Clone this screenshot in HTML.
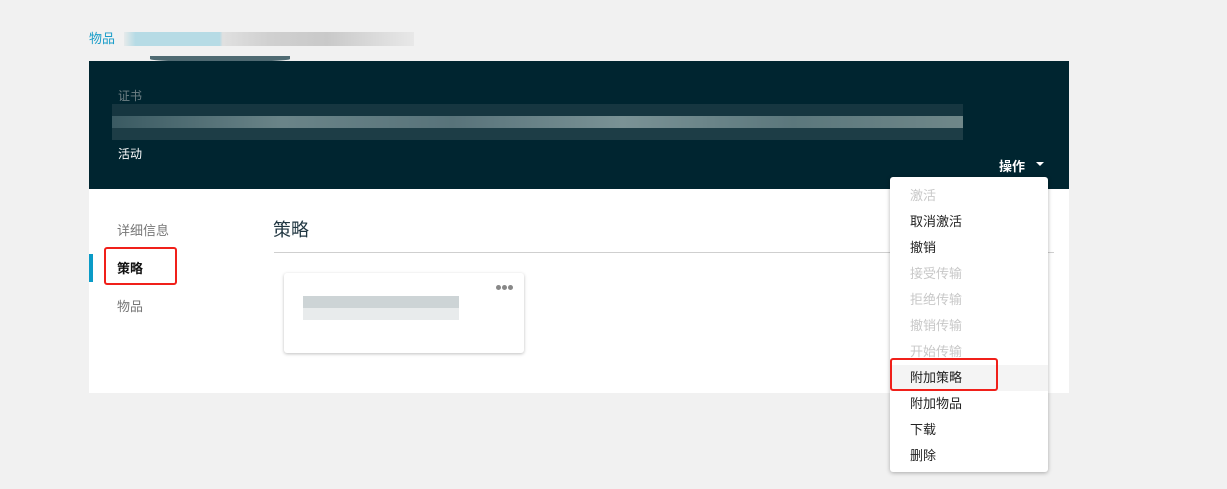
<!DOCTYPE html>
<html><head><meta charset="utf-8"><style>
*{margin:0;padding:0;box-sizing:border-box}
body{width:1227px;height:489px;background:#f1f1f1;font-family:"Liberation Sans","Noto Sans CJK SC",sans-serif;position:relative;overflow:hidden}
.abs{position:absolute}
.crumb{left:89px;top:28px;color:#1a9dc9;font-size:13px}
.hdr{left:89px;top:61px;width:980px;height:128px;background:#002530}
.panel{left:89px;top:189px;width:980px;height:204px;background:#fff}
.nav{font-size:13px;color:#777}
.menu{left:890px;top:177px;width:158px;height:295px;background:#fff;border-radius:3px;box-shadow:0 1px 4px rgba(0,0,0,.3)}
.menu div{height:26px;line-height:26px;padding-left:20px;font-size:13px;color:#222}
.menu .d{color:#c8c8c8}
.red{border:2px solid #f0201a;border-radius:3px}
</style></head><body>
<div class="abs crumb">物品</div>
<div class="abs" style="left:124px;top:32px;width:290px;height:14px;background:linear-gradient(90deg,#e6eaea 0,#b6dbe5 4%,#b6dbe5 33%,#e0e0e0 34%,#d0d0d0 50%,#c9c9c9 70%,#e8e8e8 100%)"></div>
<div class="abs" style="left:150px;top:56px;width:140px;height:6px;background:#4f6a72;border-radius:0 0 50% 50%"></div>
<div class="abs hdr"></div>
<div class="abs" style="left:118px;top:87px;font-size:12px;color:#6f8085">证书</div>
<div class="abs" style="left:112px;top:104px;width:851px;height:12px;background:#163640"></div>
<div class="abs" style="left:112px;top:116px;width:851px;height:12px;background:linear-gradient(90deg,#3a5a62,#6a8488 20%,#58737a 40%,#7a9295 60%,#5b777c 80%,#6f8789)"></div>
<div class="abs" style="left:112px;top:128px;width:851px;height:12px;background:#1d3d46"></div>
<div class="abs" style="left:118px;top:145px;font-size:12px;color:#fff">活动</div>
<div class="abs" style="left:999px;top:156px;font-size:13px;color:#fff;font-weight:bold">操作</div>
<div class="abs" style="left:1036px;top:162px;width:0;height:0;border-left:4px solid transparent;border-right:4px solid transparent;border-top:4px solid #fff"></div>
<div class="abs panel"></div>
<div class="abs nav" style="left:117px;top:220px">详细信息</div>
<div class="abs" style="left:89px;top:254px;width:4px;height:28px;background:#0a9bc7"></div>
<div class="abs red" style="left:104px;top:247px;width:73px;height:38px"></div>
<div class="abs nav" style="left:117px;top:258px;color:#111;font-weight:bold">策略</div>
<div class="abs nav" style="left:117px;top:296px">物品</div>
<div class="abs" style="left:273px;top:216px;font-size:18px;color:#1f3540">策略</div>
<div class="abs" style="left:274px;top:252px;width:780px;height:1px;background:#cfcfcf"></div>
<div class="abs" style="left:284px;top:273px;width:240px;height:80px;background:#fff;border-radius:3px;box-shadow:0 1px 3px rgba(0,0,0,.25)"></div>
<div class="abs" style="left:496px;top:285px;width:5px;height:5px;border-radius:50%;background:#888"></div>
<div class="abs" style="left:502px;top:285px;width:5px;height:5px;border-radius:50%;background:#888"></div>
<div class="abs" style="left:508px;top:285px;width:5px;height:5px;border-radius:50%;background:#888"></div>
<div class="abs" style="left:303px;top:296px;width:156px;height:12px;background:#cdd4d6"></div>
<div class="abs" style="left:303px;top:308px;width:156px;height:12px;background:#e8ebec"></div>
<div class="abs menu">
<div class="d" style="margin-top:6px">激活</div><div>取消激活</div><div>撤销</div><div class="d">接受传输</div><div class="d">拒绝传输</div><div class="d">撤销传输</div><div class="d">开始传输</div><div style="background:#f4f4f4">附加策略</div><div>附加物品</div><div>下载</div><div>删除</div>
</div>
<div class="abs red" style="left:890px;top:358px;width:108px;height:33px"></div>
</body></html>
